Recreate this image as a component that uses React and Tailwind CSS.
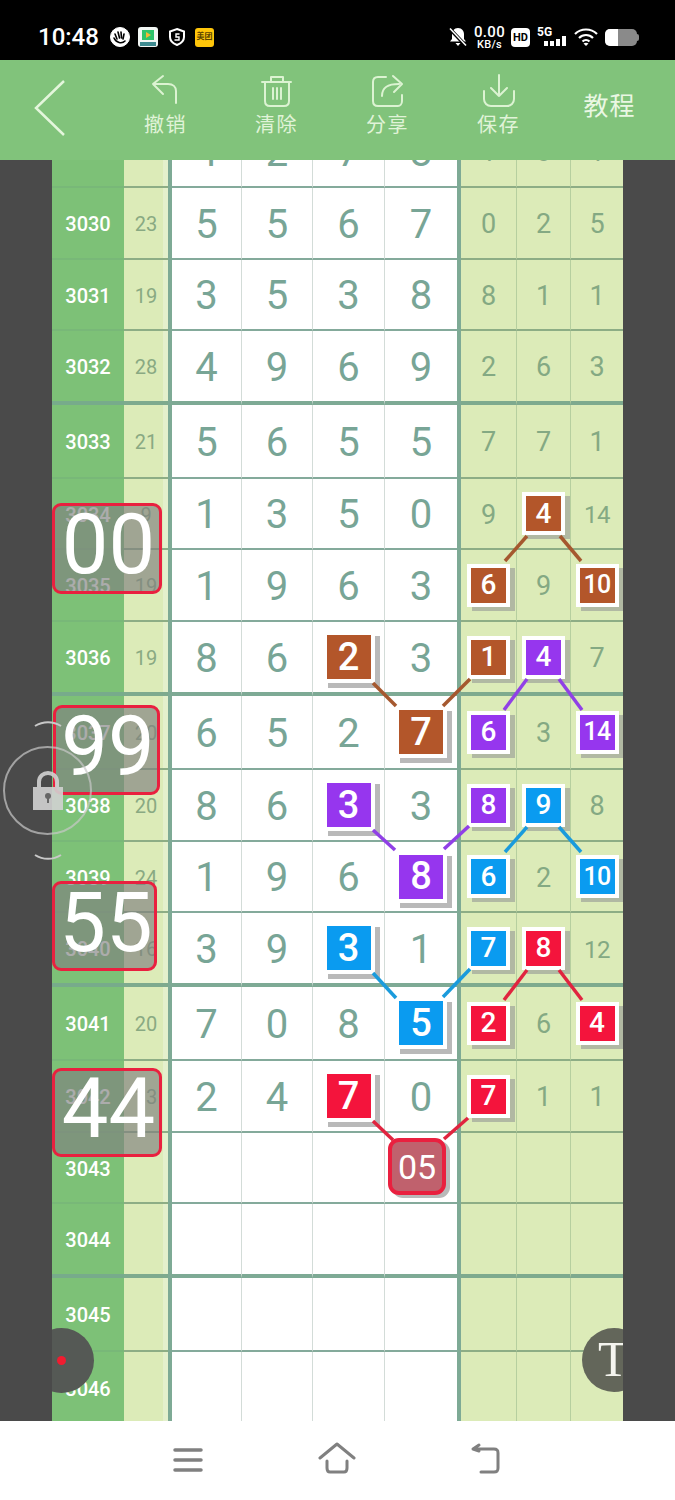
import React from "react";

const tileColors = {
  brown: "bg-[#b3562a]",
  purple: "bg-[#9636ee]",
  blue: "bg-[#0a9bf0]",
  red: "bg-[#f4143c]",
};

// each digit is a number or [number, colour] when it is picked out as a tile
const rows = [
  { id: 3029, sum: 24, h: "h-[72px]", d: [4, 2, 7, 8], r: [1, 8, 1] },
  { id: 3030, sum: 23, h: "h-[72px]", d: [5, 5, 6, 7], r: [0, 2, 5] },
  { id: 3031, sum: 19, h: "h-[71px]", d: [3, 5, 3, 8], r: [8, 1, 1] },
  { id: 3032, sum: 28, h: "h-[74px]", thick: true, d: [4, 9, 6, 9], r: [2, 6, 3] },
  { id: 3033, sum: 21, h: "h-[74px]", d: [5, 6, 5, 5], r: [7, 7, 1] },
  { id: 3034, sum: 9, h: "h-[71px]", d: [1, 3, 5, 0], r: [9, [4, "brown"], 14] },
  { id: 3035, sum: 19, h: "h-[72px]", d: [1, 9, 6, 3], r: [[6, "brown"], 9, [10, "brown"]] },
  { id: 3036, sum: 19, h: "h-[74px]", thick: true, d: [8, 6, [2, "brown"], 3], r: [[1, "brown"], [4, "purple"], 7] },
  { id: 3037, sum: 20, h: "h-[74px]", d: [6, 5, 2, [7, "brown"]], r: [[6, "purple"], 3, [14, "purple"]] },
  { id: 3038, sum: 20, h: "h-[72px]", d: [8, 6, [3, "purple"], 3], r: [[8, "purple"], [9, "blue"], 8] },
  { id: 3039, sum: 24, h: "h-[71px]", d: [1, 9, 6, [8, "purple"]], r: [[6, "blue"], 2, [10, "blue"]] },
  { id: 3040, sum: 16, h: "h-[74px]", thick: true, d: [3, 9, [3, "blue"], 1], r: [[7, "blue"], [8, "red"], 12] },
  { id: 3041, sum: 20, h: "h-[74px]", d: [7, 0, 8, [5, "blue"]], r: [[2, "red"], 6, [4, "red"]] },
  { id: 3042, sum: 13, h: "h-[72px]", d: [2, 4, [7, "red"], 0], r: [[7, "red"], 1, 1] },
  { id: 3043, h: "h-[71px]", d: ["", "", "", ""], r: ["", "", ""] },
  { id: 3044, h: "h-[74px]", thick: true, d: ["", "", "", ""], r: ["", "", ""] },
  { id: 3045, h: "h-[74px]", d: ["", "", "", ""], r: ["", "", ""] },
  { id: 3046, h: "h-[74px]", d: ["", "", "", ""], r: ["", "", ""] },
];

// connector lines, in page coordinates
const links = [
  ["#a5582f", 373, 683, 396, 706],
  ["#a5582f", 443, 706, 470, 679],
  ["#a5582f", 527, 536, 505, 561],
  ["#a5582f", 560, 536, 581, 561],
  ["#9040e6", 527, 679, 504, 710],
  ["#9040e6", 559, 679, 582, 710],
  ["#9040e6", 373, 830, 395, 850],
  ["#9040e6", 444, 849, 469, 826],
  ["#1a9bdc", 527, 827, 505, 852],
  ["#1a9bdc", 559, 827, 581, 852],
  ["#1a9bdc", 373, 973, 396, 998],
  ["#1a9bdc", 443, 997, 470, 969],
  ["#e0243f", 527, 970, 504, 1000],
  ["#e0243f", 559, 970, 582, 1000],
  ["#e0243f", 373, 1121, 393, 1140],
  ["#e0243f", 444, 1139, 468, 1118],
];

const marks = [
  { text: "00", pos: "left-0 top-[343px] w-[110px] h-[91px]" },
  { text: "99", pos: "left-px top-[545px] w-[107px] h-[90px]" },
  { text: "55", pos: "left-0 top-[721px] w-[105px] h-[90px]" },
  { text: "44", pos: "left-0 top-[908px] w-[110px] h-[89px]" },
];

function Digit({ v }) {
  if (Array.isArray(v)) {
    return (
      <div className={`${tileColors[v[1]]} w-[52px] h-[52px] border-4 border-white shadow-[5px_5px_0_#b9b9b9] flex items-center justify-center text-white text-[38px] font-medium`}>
        {v[0]}
      </div>
    );
  }
  return <span className="mt-[3px] text-[40px] text-[#78a596]">{v}</span>;
}

function Miss({ v }) {
  if (Array.isArray(v)) {
    return (
      <div className={`${tileColors[v[1]]} w-[43px] h-[43px] border-4 border-white shadow-[5px_4px_0_#b1b9a3] flex items-center justify-center text-white font-medium ${v[0] > 9 ? "text-[25px] tracking-tight" : "text-[28px]"}`}>
        {v[0]}
      </div>
    );
  }
  return <span className={`mt-[3px] text-[#84a983] ${v > 9 ? "text-[24px] tracking-tight" : "text-[27px]"}`}>{v}</span>;
}

function Row({ row }) {
  const digitLine = row.thick ? "border-b-4 border-b-[#7eaa95]" : "border-b-2 border-b-[#84aa9b]";
  const missLine = row.thick ? "border-b-4 border-b-[#7eaa8e]" : "border-b-2 border-b-[#8dad85]";
  return (
    <div className={`grid grid-cols-[72px_44px_4px_70px_71px_72px_72px_4px_56px_54px_52px] ${row.h}`}>
      <div className={`bg-[#7dc177] flex items-center justify-center text-white text-[20px] font-medium ${row.thick ? "border-b-4 border-b-[#77ab8b]" : "border-b-2 border-b-[#78b878]"}`}>
        <span className="mt-[2px]">{row.id}</span>
      </div>
      <div className={`bg-[#dcebb8] shadow-[inset_-5px_0_0_#e4f0cc] flex items-center justify-center text-[20px] text-[#89a982] ${missLine}`}>
        <span className="mt-[2px]">{row.sum}</span>
      </div>
      <div className="bg-[#7eaa95]" />
      {row.d.map((v, i) => (
        <div key={i} className={`bg-white flex items-center justify-center ${digitLine} ${i < 3 ? "border-r border-r-[#d3dcd8]" : ""}`}>
          <Digit v={v} />
        </div>
      ))}
      <div className="bg-[#7eaa95]" />
      {row.r.map((v, i) => (
        <div key={i} className={`bg-[#dcebb8] flex items-center justify-center ${missLine} ${i < 2 ? "border-r border-r-[#b6cf9f]" : ""}`}>
          <Miss v={v} />
        </div>
      ))}
    </div>
  );
}

function StatusBar() {
  return (
    <div className="h-[60px] bg-black flex items-center pl-[38px] pr-[36px] pt-[14px] text-white">
      <span className="text-[24px] font-medium leading-none w-[70px]">10:48</span>
      <div className="flex items-center">
        <svg width="22" height="22" viewBox="0 0 22 22" className="ml-px">
          <circle cx="11" cy="11" r="9.500" fill="white" stroke="white" strokeWidth="1" />
          <path d="M6 8l2 5M9 6l1.500 6M12 6l.5 6M15 8l-1 5M5 12c2 5 8 6 11 3" stroke="black" strokeWidth="1.600" fill="none" strokeLinecap="round" />
        </svg>
        <svg width="20" height="20" viewBox="0 0 20 20" className="ml-[7px]">
          <rect width="20" height="20" rx="3" fill="#f2f7f4" />
          <path d="M4 3h12v10H4z" fill="#2fc46b" />
          <path d="M8 5l5 3-5 3z" fill="#f7b733" />
          <rect x="2" y="15" width="16" height="4" fill="#3d8a8f" />
        </svg>
        <svg width="18" height="20" viewBox="0 0 18 20" className="ml-[10px]">
          <path d="M9 2l7 2.500V10c0 4-3 6.500-7 8-4-1.500-7-4-7-8V4.500z" fill="none" stroke="white" strokeWidth="2" />
          <path d="M11.500 7H8v3h3v3H6.500" fill="none" stroke="white" strokeWidth="1.400" />
        </svg>
        <div className="ml-[9px] w-[19px] h-[19px] rounded-[3px] bg-[#ffc60a] flex items-center justify-center text-[8px] leading-none font-bold text-[#5a4300]">
          美团
        </div>
      </div>
      <div className="ml-auto flex items-center">
        <svg width="20" height="20" viewBox="0 0 20 20">
          <path d="M10 1c4 0 6 3 6 6.500V12l2 2.500H2L4 12V7.500C4 4 6 1 10 1zM7.500 16h5L10 19z" fill="white" />
          <path d="M2 2l16 17" stroke="black" strokeWidth="3.500" />
          <path d="M2 1.500l16 17" stroke="white" strokeWidth="1.500" />
        </svg>
        <div className="ml-[5px] w-[33px] flex flex-col items-center leading-none font-medium">
          <span className="text-[15px] leading-[14px] tracking-wide">0.00</span>
          <span className="text-[11px] leading-[11px] tracking-wide">KB/s</span>
        </div>
        <div className="ml-[5px] w-[19px] h-[19px] rounded-[4px] bg-white flex items-center justify-center text-black text-[11px] font-bold leading-none">
          HD
        </div>
        <div className="ml-[7px] w-[30px] h-[20px] relative">
          <span className="absolute left-0 top-0 text-[12px] leading-[11px] font-bold">5G</span>
          <svg width="30" height="20" viewBox="0 0 30 20" className="absolute left-0 top-0">
            <rect x="7" y="14" width="4" height="5" fill="white" />
            <rect x="13" y="14" width="4" height="5" fill="white" />
            <rect x="19" y="12" width="4" height="7" fill="white" />
            <rect x="25" y="9" width="4" height="10" fill="white" />
          </svg>
        </div>
        <svg width="24" height="20" viewBox="0 0 24 20" className="ml-[7px]">
          <path d="M1 7c6-6 16-6 22 0M5 11c4-4 10-4 14 0M8.500 14.500c2-2 5-2 7 0" fill="none" stroke="white" strokeWidth="2.200" />
          <path d="M12 19l-2.500-2.500c1.500-1 3.500-1 5 0z" fill="white" />
        </svg>
        <div className="ml-[7px] w-[32px] h-[17px] rounded-[5px] bg-[#8a8a8a] overflow-hidden">
          <div className="w-[13px] h-full bg-white" />
        </div>
        <div className="w-[2px] h-[7px] bg-[#8a8a8a] rounded-r" />
      </div>
    </div>
  );
}

function Tool({ label, children }) {
  return (
    <div className="w-[111px] flex flex-col items-center">
      <svg width="36" height="36" viewBox="0 0 36 36" fill="none" stroke="#dcf3d2" strokeWidth="2" strokeLinecap="round" strokeLinejoin="round">
        {children}
      </svg>
      <span className="text-[20px] leading-[30px] text-[#e0f3d8] tracking-[1.5px]">{label}</span>
    </div>
  );
}

function Toolbar() {
  return (
    <div className="h-[100px] bg-[#81c37b] flex items-start">
      <div className="w-[110px] h-full flex items-center">
        <svg width="40" height="60" viewBox="0 0 40 60" fill="none" stroke="#e4f6dc" strokeWidth="2.500" className="ml-[31px] mt-[-4px]">
          <path d="M33 3L5 30l28 27" />
        </svg>
      </div>
      <div className="flex pt-[14px]">
        <Tool label="撤销">
          <path d="M15 2L5 10l10 10M5 10h15c5 0 8 3 8 7v12" />
        </Tool>
        <Tool label="清除">
          <path d="M3 8h29M12 8V3h12v5M6 8v19c0 3 2 5 5 5h14c3 0 5-2 5-5V8M14 14v11M18 14v11M22 14v11" />
        </Tool>
        <Tool label="分享">
          <path d="M16 3H8C5 3 3 5 3 8v19c0 3 2 5 5 5h20c2 0 4-2 4-5v-6M12 22c0-9 6-12 17-12M23 2l9 8-8 8" />
        </Tool>
        <Tool label="保存">
          <path d="M18 1v21M10 14l8 8 8-8M3 17v8c0 4 3 7 7 7h16c4 0 7-3 7-7v-8" />
        </Tool>
        <div className="w-[111px] h-[66px] flex items-center justify-center text-[25px] text-[#eaf7e3] tracking-[1px]">教程</div>
      </div>
    </div>
  );
}

function Sheet() {
  return (
    <div className="h-[1261px] bg-[#4a4a4a] px-[52px]">
      <div className="relative w-[571px] h-full overflow-hidden">
        <div className="mt-[-44px]">
          {rows.map((row) => (
            <Row key={row.id} row={row} />
          ))}
        </div>

        <svg width="571" height="1261" viewBox="52 160 571 1261" className="absolute left-0 top-0 pointer-events-none">
          {links.map(([c, x1, y1, x2, y2], i) => (
            <line key={i} x1={x1} y1={y1} x2={x2} y2={y2} stroke={c} strokeWidth="3.500" />
          ))}
        </svg>

        {marks.map((m) => (
          <div key={m.text} className={`absolute ${m.pos} rounded-[9px] border-[3px] border-[#e9203f] bg-[#7f7f7f]/65 flex items-center justify-center pb-[8px] pl-[3px] text-white text-[83px] leading-none`}>
            {m.text}
          </div>
        ))}

        <div className="absolute left-[336px] top-[978px] w-[58px] h-[57px] rounded-[11px] border-[4px] border-[#e9203f] bg-[#c0616d] shadow-[4px_3px_0_#b9b9b9] flex items-center justify-center text-white text-[34px] leading-none">
          05
        </div>

        <div className="absolute left-[-23px] top-[1168px] w-[65px] h-[65px] rounded-full bg-[#555955] flex items-center justify-center">
          <div className="w-[9px] h-[9px] rounded-full bg-[#f01c30]" />
        </div>
        <div className="absolute left-[530px] top-[1168px] w-[64px] h-[64px] rounded-full bg-[#63665a] pl-[16px] text-[#f4f4ee] text-[50px] leading-[62px] font-['Liberation_Serif',serif]">
          T
        </div>
      </div>

      {/* floating lock, sits over the sheet and the dark gutter */}
      <div className="absolute left-[3px] top-[746px] w-[89px] h-[89px] rounded-full border-2 border-[#c8c8c8]/70 flex items-center justify-center">
        <svg width="32" height="40" viewBox="0 0 32 40" className="opacity-90">
          <path d="M7 17v-6c0-12 18-12 18 0v6" fill="none" stroke="#d2d2d2" strokeWidth="4" />
          <path d="M1 16h30v23H1z" fill="#d2d2d2" />
          <circle cx="16" cy="25" r="3" fill="#6a6a6a" />
          <path d="M15 26h2v6h-2z" fill="#6a6a6a" />
        </svg>
      </div>
      <svg width="28" height="6" viewBox="0 0 28 6" fill="none" stroke="#c8c8c8" strokeWidth="2" className="absolute left-[34px] top-[721px]">
        <path d="M1 5c8-5 18-5 26 0" />
      </svg>
      <svg width="28" height="6" viewBox="0 0 28 6" fill="none" stroke="#c8c8c8" strokeWidth="2" className="absolute left-[34px] top-[854px]">
        <path d="M1 1c8 5 18 5 26 0" />
      </svg>
    </div>
  );
}

function NavBar() {
  return (
    <div className="h-[79px] bg-white flex items-start pt-[21px] pl-[172px]">
      <svg width="32" height="32" viewBox="0 0 32 32" fill="none" stroke="#808080" strokeWidth="3.500" strokeLinecap="round">
        <path d="M3 8h26M3 18h26M3 28h26" />
      </svg>
      <svg width="38" height="32" viewBox="0 0 38 32" fill="none" stroke="#808080" strokeWidth="3" strokeLinecap="round" strokeLinejoin="round" className="ml-[114px]">
        <path d="M2 16L19 2l17 14M9 19v7c0 3 1 4 3 4h14c2 0 3-1 3-4v-7" />
      </svg>
      <svg width="34" height="32" viewBox="0 0 34 32" fill="none" stroke="#808080" strokeWidth="3" strokeLinecap="round" strokeLinejoin="round" className="ml-[113px]">
        <path d="M10 3L4 7l6 2M4 7h21c3 0 4 1 4 4v15c0 3-1 4-4 4H12" />
      </svg>
    </div>
  );
}

export default function App() {
  return (
    <div className="relative w-[675px] h-[1500px] overflow-hidden font-['Roboto','Noto_Sans_CJK_SC',sans-serif]">
      <StatusBar />
      <Toolbar />
      <Sheet />
      <NavBar />
    </div>
  );
}
